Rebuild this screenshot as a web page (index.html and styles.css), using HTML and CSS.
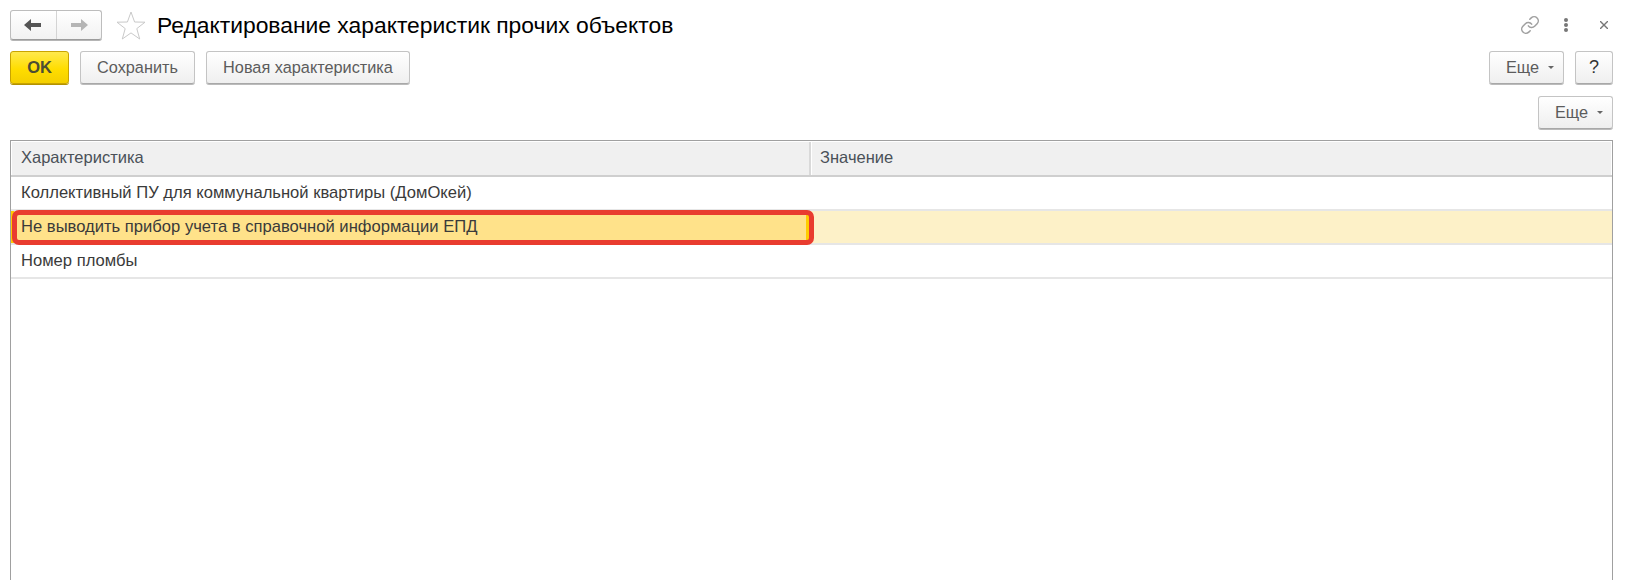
FILE: index.html
```html
<!DOCTYPE html>
<html lang="ru">
<head>
<meta charset="utf-8">
<title>Редактирование характеристик прочих объектов</title>
<link rel="stylesheet" href="styles.css">
</head>
<body>
<div class="page">
  <header class="titlebar">
    <div class="nav">
      <button class="nav-btn" aria-label="Назад">
        <svg width="18" height="14" viewBox="0 0 18 14"><path d="M0 7 L7 1 V5 H17 V9 H7 V13 Z" fill="#555"/></svg>
      </button>
      <button class="nav-btn" aria-label="Вперед">
        <svg width="18" height="14" viewBox="0 0 18 14"><path d="M18 7 L11 1 V5 H1 V9 H11 V13 Z" fill="#b5b5b5"/></svg>
      </button>
    </div>
    <svg class="star" width="30" height="29" viewBox="0 0 30 29"><path d="M15 1 L18.6 11 L29 11.2 L20.8 17.6 L23.7 28 L15 21.9 L6.3 28 L9.2 17.6 L1 11.2 L11.4 11 Z" fill="#fff" stroke="#c9c9c9" stroke-width="1"/></svg>
    <h1 class="title">Редактирование характеристик прочих объектов</h1>
    <div class="win-icons">
      <svg class="icon-link" width="20" height="20" viewBox="0 0 24 24" fill="none" stroke="#a0a0a0" stroke-width="1.8" stroke-linecap="round"><path d="M10 13a5 5 0 0 0 7.54.54l3-3a5 5 0 0 0-7.07-7.07l-1.72 1.71"/><path d="M14 11a5 5 0 0 0-7.54-.54l-3 3a5 5 0 0 0 7.07 7.07l1.71-1.71"/></svg>
      <svg class="icon-dots" width="4" height="14" viewBox="0 0 4 14" fill="#777"><circle cx="2" cy="2" r="2"/><circle cx="2" cy="7" r="2"/><circle cx="2" cy="12" r="2"/></svg>
      <svg class="icon-close" width="8" height="8" viewBox="0 0 8 8" stroke="#777" stroke-width="1.4"><path d="M0 0 L8 8 M8 0 L0 8"/></svg>
    </div>
  </header>

  <div class="toolbar">
    <button class="btn btn-ok">OK</button>
    <button class="btn btn-save">Сохранить</button>
    <button class="btn btn-new">Новая характеристика</button>
    <button class="btn btn-more push">Еще<span class="caret"></span></button>
    <button class="btn btn-help">?</button>
  </div>

  <div class="toolbar2">
    <button class="btn btn-more">Еще<span class="caret"></span></button>
  </div>

  <div class="table">
    <div class="thead">
      <div class="th th-first">Характеристика</div>
      <div class="th th-value">Значение</div>
    </div>
    <div class="row"><div class="cell cell-first">Коллективный ПУ для коммунальной квартиры (ДомОкей)</div><div class="cell"></div></div>
    <div class="row row-selected">
      <div class="cell cell-first cell-current">Не выводить прибор учета в справочной информации ЕПД</div><div class="cell"></div>
      <div class="marker"></div>
    </div>
    <div class="row"><div class="cell cell-first">Номер пломбы</div><div class="cell"></div></div>
  </div>
</div>
</body>
</html>
```
FILE: styles.css
```css
* { box-sizing: border-box; }
html, body { margin: 0; padding: 0; background: #fff; }
body { font-family: "Liberation Sans", Arial, sans-serif; overflow: hidden; }
.page { width: 1638px; height: 580px; display: flex; flex-direction: column; padding: 10px 25px 0 10px; }

.titlebar { display: flex; align-items: center; height: 30px; }
.nav { display: flex; width: 92px; height: 30px; border: 1px solid #bdbdbd; border-bottom-color: #9c9c9c; border-radius: 3px; background: linear-gradient(#fff, #f2f2f2); box-shadow: 0 1px 0 #b5b5b5; }
.nav-btn { flex: 1; border: 0; padding: 0; background: none; display: flex; align-items: center; justify-content: center; }
.nav-btn + .nav-btn { border-left: 1px solid #d4d4d4; }
.star { margin-left: 14px; }
.title { margin: 0 0 0 11px; font-size: 22.85px; font-weight: 400; color: #000; white-space: nowrap; }
.win-icons { margin-left: auto; margin-right: 5px; display: flex; align-items: center; }
.icon-link { margin-right: 24px; margin-top: -1px; }
.icon-dots { margin-right: 32px; }

.toolbar { display: flex; gap: 11px; margin-top: 11px; height: 33px; }
.toolbar2 { display: flex; justify-content: flex-end; margin-top: 12px; height: 33px; }
.btn { height: 33px; padding: 0; border: 1px solid #c4c4c4; border-bottom-color: #a8a8a8; border-radius: 3px; background: linear-gradient(#fff, #efefef); box-shadow: 0 1px 0 #bbb; font: 16.3px "Liberation Sans", Arial, sans-serif; color: #5c5c5c; display: flex; align-items: center; justify-content: center; }
.btn-ok { width: 59px; background: linear-gradient(#ffe94d, #ffdd00 55%, #f4cf00); border-color: #c9a400; box-shadow: 0 1px 0 #b39200; font-weight: 700; font-size: 16.5px; color: #4d4d33; }
.btn-save { width: 115px; }
.btn-new { width: 204px; }
.btn-more { width: 75px; justify-content: flex-start; padding-left: 16px; }
.btn-help { width: 38px; font-size: 18px; color: #333; }
.push { margin-left: auto; }
.caret { width: 0; height: 0; margin-left: 9px; border: 3px solid transparent; border-top: 3px solid #666; border-bottom: 0; }

.table { flex: 1; margin-top: 11px; border: 1px solid #a0a0a0; border-bottom: 0; background: #fff; }
.thead { display: flex; height: 36px; padding-top: 1px; border-bottom: 2px solid #cfcfcf; }
.th { flex: 1; background: #f0f0f0; font-size: 16.5px; color: #4a5158; line-height: 31px; padding-left: 9px; border-left: 1px solid #fff; border-right: 1px solid #fff; white-space: nowrap; }
.th-first { flex: 0 0 800px; border-right: 2px solid #d9d9d9; }
.th-value { padding-left: 8px; }
.row { display: flex; height: 34px; border-bottom: 2px solid #e6e6e6; position: relative; }
.cell { flex: 1; font-size: 16.6px; color: #3a3a3a; line-height: 32px; white-space: nowrap; }
.cell-first { flex: 0 0 798px; padding-left: 10px; }
.row-selected { background: #fdf1c8; }
.cell-current { padding-left: 7px; line-height: 31px; background: #ffe28a; border-left: 3px solid #fc0; border-right: 3px solid #fc0; }
.marker { position: absolute; left: 1px; top: -1px; width: 802px; height: 35px; border: 5px solid #e93c2f; border-radius: 7px; }
```
